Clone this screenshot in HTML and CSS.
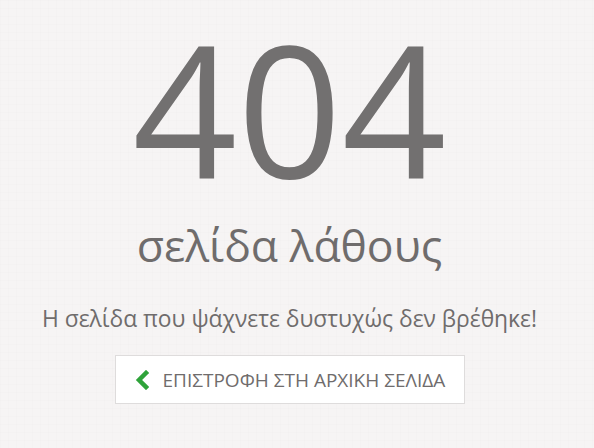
FILE: index.html
```html
<!DOCTYPE html>
<html lang="el">
<head>
  <meta charset="UTF-8">
  <title>404 - σελίδα λάθους</title>
  <meta name="viewport" content="width=device-width, initial-scale=1.0">
  <link rel="stylesheet" href="styles.css">
</head>
<body>
  <div class="error-page">
    <h1 class="error-code">404</h1>
    <h2 class="error-title">σελίδα λάθους</h2>
    <p class="error-text">Η σελίδα που ψάχνετε δυστυχώς δεν βρέθηκε!</p>
    <a class="back-btn" href="#">
      <svg class="back-icon" width="15" height="20" viewBox="0 0 15 20">
        <path d="M12 3 L5 10 L12 17" fill="none" stroke="#2fa33a" stroke-width="4.5" stroke-linecap="square" stroke-linejoin="miter"/>
      </svg>
      ΕΠΙΣΤΡΟΦΗ ΣΤΗ ΑΡΧΙΚΗ ΣΕΛΙΔΑ
    </a>
  </div>
</body>
</html>
```

FILE: styles.css
```css
body {
  margin: 0;
  padding: 0;
  font-family: "Open Sans", "DejaVu Sans", sans-serif;
  color: #6f6c6c;
  background-color: #f6f4f4;
  background-image:
    linear-gradient(rgba(0,0,0,0.008) 1px, transparent 1px),
    linear-gradient(90deg, rgba(0,0,0,0.008) 1px, transparent 1px);
  background-size: 8px 8px;
}
.error-page {
  width: 579px;
  display: flex;
  flex-direction: column;
  align-items: center;
  text-align: center;
}
.error-code {
  margin: 0;
  padding-top: 15px;
  font-size: 183px;
  font-weight: 400;
  line-height: 184px;
  color: #727070;
}
.error-title {
  margin: 16px 0 0;
  font-size: 44.5px;
  font-weight: 400;
  line-height: 60px;
}
.error-text {
  margin: 28px 0 0;
  font-size: 22.8px;
  line-height: 32px;
  white-space: nowrap;
}
.back-btn {
  display: flex;
  align-items: center;
  gap: 14px;
  margin-top: 20px;
  padding: 1px 0 0 18px;
  height: 49px;
  box-sizing: border-box;
  width: 350px;
  background: #fff;
  border: 1px solid #dedcdc;
  color: #6f6c6c;
  font-size: 19px;
  text-decoration: none;
  white-space: nowrap;
}
.back-icon {
  flex: none;
}
```
